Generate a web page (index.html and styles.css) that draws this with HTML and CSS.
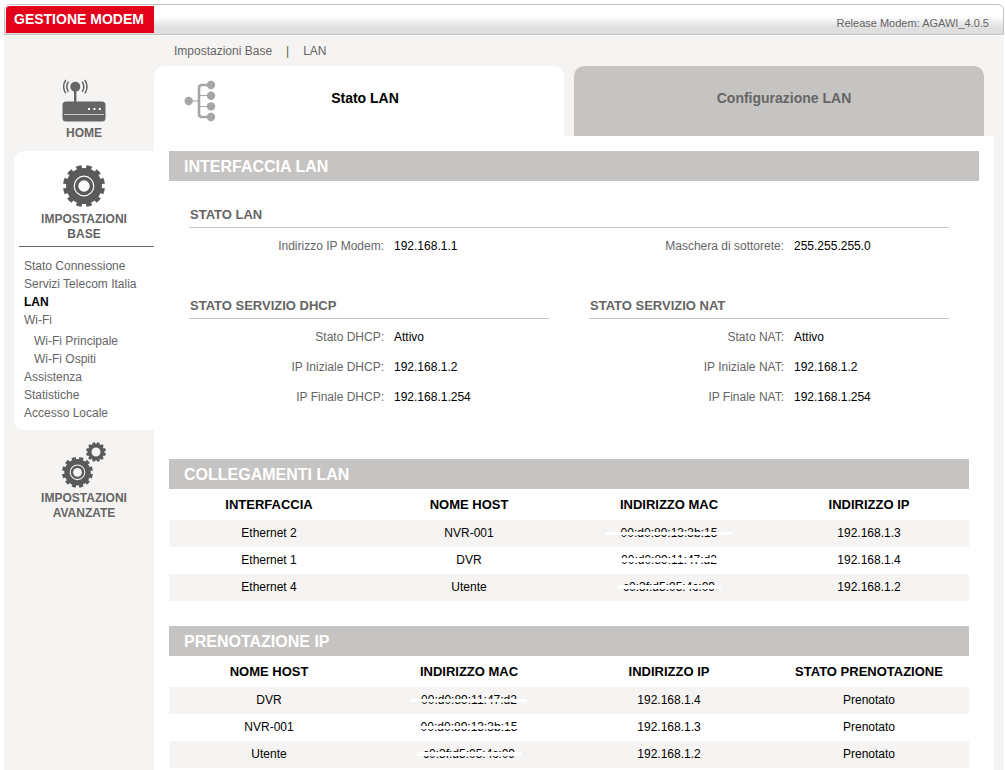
FILE: index.html
```html
<!DOCTYPE html>
<html lang="it">
<head>
<meta charset="utf-8">
<title>Gestione Modem - Stato LAN</title>
<link rel="stylesheet" href="styles.css">
</head>
<body>
<div class="page">
  <header class="topbar">
    <h1 class="brand">GESTIONE MODEM</h1>
    <span class="release">Release Modem: AGAWI_4.0.5</span>
  </header>
  <div class="layout">
    <nav class="sidebar">
      <a class="nav-main nav-home" href="#home">
        <svg class="icon-home" viewBox="0 0 44 43" width="44" height="43" aria-hidden="true">
          <rect x="0.5" y="22.5" width="43" height="20" rx="3.5" fill="#656565"/>
          <rect x="12" y="8" width="2.4" height="16" fill="#656565"/>
          <circle cx="13.3" cy="7.7" r="5" fill="#656565"/>
          <path d="M6.4 2.6Q3.2 7.7 6.4 12.8M3.8 1Q-0.6 7.7 3.8 14.4M20.2 2.6Q23.4 7.7 20.2 12.8M22.8 1Q27.2 7.7 22.8 14.4" fill="none" stroke="#656565" stroke-width="1.5"/>
          <path d="M2 35.5H42" stroke="#c9c9c9"/>
          <path d="M26 30h2M31.4 30h2M36.8 30h2" stroke="#fff" stroke-width="2"/>
        </svg>
        <span>HOME</span>
      </a>
      <div class="panel">
        <a class="nav-main nav-base" href="#base">
          <svg viewBox="0 0 42 42" width="42" height="42" aria-hidden="true">
            <circle cx="21" cy="21" r="19" fill="none" stroke="#5a5a5a" stroke-width="4" pathLength="24" stroke-dasharray="1.1 0.9" stroke-dashoffset="-0.45"/>
            <circle cx="21" cy="21" r="18" fill="#5a5a5a"/>
            <circle cx="21" cy="21" r="9.8" fill="none" stroke="#fff" stroke-width="1.2"/>
            <circle cx="21" cy="21" r="5.7" fill="#fff"/>
          </svg>
          <span>IMPOSTAZIONI<br>BASE</span>
        </a>
        <ul class="submenu">
          <li><a href="#conn">Stato Connessione</a></li>
          <li><a href="#servizi">Servizi Telecom Italia</a></li>
          <li><a class="current" href="#lan">LAN</a></li>
          <li><a href="#wifi">Wi-Fi</a>
            <ul class="nested">
              <li><a href="#principale">Wi-Fi Principale</a></li>
              <li><a href="#ospiti">Wi-Fi Ospiti</a></li>
            </ul>
          </li>
          <li><a href="#assistenza">Assistenza</a></li>
          <li><a href="#statistiche">Statistiche</a></li>
          <li><a href="#accesso">Accesso Locale</a></li>
        </ul>
      </div>
      <a class="nav-main nav-adv" href="#avanzate">
        <svg viewBox="0 0 44 46" width="44" height="46" aria-hidden="true">
          <circle cx="15.5" cy="30.3" r="13.8" fill="none" stroke="#5a5a5a" stroke-width="3.4" pathLength="24" stroke-dasharray="1.1 0.9" stroke-dashoffset="-0.45"/>
          <circle cx="15.5" cy="30.3" r="13.2" fill="#5a5a5a"/>
          <circle cx="15.5" cy="30.3" r="7.3" fill="none" stroke="#f5f4f2" stroke-width="1.1"/>
          <circle cx="15.5" cy="30.3" r="4.4" fill="#f5f4f2"/>
          <circle cx="34" cy="10" r="8.7" fill="none" stroke="#5a5a5a" stroke-width="2.4" pathLength="24" stroke-dasharray="1.1 0.9" stroke-dashoffset="-0.45"/>
          <circle cx="34" cy="10" r="6.5" fill="none" stroke="#5a5a5a" stroke-width="4"/>
        </svg>
        <span>IMPOSTAZIONI<br>AVANZATE</span>
      </a>
    </nav>
    <main class="main">
      <div class="breadcrumb"><a href="#base">Impostazioni Base</a><span class="sep">|</span><a href="#lan">LAN</a></div>
      <div class="tabs">
        <a class="tab active" href="#stato">
          <svg class="tab-icon" viewBox="0 0 32 42" width="32" height="42" aria-hidden="true">
            <g fill="none" stroke="#a6a6a6">
              <path d="M27 5H18Q15 5 15 8V34Q15 37 18 37H27" stroke-width="2.6"/>
              <path d="M5 21H15M15 15.5H27M15 26.5H27" stroke-width="1.2"/>
            </g>
            <g fill="#a6a6a6">
              <circle cx="4.7" cy="21" r="4.2"/><circle cx="27" cy="5" r="4.2"/><circle cx="27" cy="15.7" r="4.2"/><circle cx="27" cy="26.4" r="4.2"/><circle cx="27" cy="37" r="4.2"/>
            </g>
          </svg>
          Stato LAN</a>
        <a class="tab" href="#config">Configurazione LAN</a>
      </div>
      <div class="content">
        <section class="interface">
          <h2 class="bar">INTERFACCIA LAN</h2>
          <div class="groups">
            <div class="group wide">
              <h3>STATO LAN</h3>
              <dl class="pair"><dt>Indirizzo IP Modem:</dt><dd>192.168.1.1</dd></dl>
              <dl class="pair"><dt>Maschera di sottorete:</dt><dd>255.255.255.0</dd></dl>
            </div>
            <div class="group">
              <h3>STATO SERVIZIO DHCP</h3>
              <dl class="pair"><dt>Stato DHCP:</dt><dd>Attivo</dd><dt>IP Iniziale DHCP:</dt><dd>192.168.1.2</dd><dt>IP Finale DHCP:</dt><dd>192.168.1.254</dd></dl>
            </div>
            <div class="group">
              <h3>STATO SERVIZIO NAT</h3>
              <dl class="pair"><dt>Stato NAT:</dt><dd>Attivo</dd><dt>IP Iniziale NAT:</dt><dd>192.168.1.2</dd><dt>IP Finale NAT:</dt><dd>192.168.1.254</dd></dl>
            </div>
          </div>
        </section>
        <section class="listing">
          <h2 class="bar">COLLEGAMENTI LAN</h2>
          <table>
            <thead><tr><th>INTERFACCIA</th><th>NOME HOST</th><th>INDIRIZZO MAC</th><th>INDIRIZZO IP</th></tr></thead>
            <tbody>
              <tr><td>Ethernet 2</td><td>NVR-001</td><td><span class="mac long">00:d0:89:13:3b:15</span></td><td>192.168.1.3</td></tr>
              <tr><td>Ethernet 1</td><td>DVR</td><td><span class="mac thick">00:d0:89:11:47:d2</span></td><td>192.168.1.4</td></tr>
              <tr><td>Ethernet 4</td><td>Utente</td><td><span class="mac thick">c0:3f:d5:05:4c:09</span></td><td>192.168.1.2</td></tr>
            </tbody>
          </table>
        </section>
        <section class="listing">
          <h2 class="bar">PRENOTAZIONE IP</h2>
          <table>
            <thead><tr><th>NOME HOST</th><th>INDIRIZZO MAC</th><th>INDIRIZZO IP</th><th>STATO PRENOTAZIONE</th></tr></thead>
            <tbody>
              <tr><td>DVR</td><td><span class="mac">00:d0:89:11:47:d2</span></td><td>192.168.1.4</td><td>Prenotato</td></tr>
              <tr><td>NVR-001</td><td><span class="mac">00:d0:89:13:3b:15</span></td><td>192.168.1.3</td><td>Prenotato</td></tr>
              <tr><td>Utente</td><td><span class="mac thick">c0:3f:d5:05:4c:09</span></td><td>192.168.1.2</td><td>Prenotato</td></tr>
            </tbody>
          </table>
        </section>
      </div>
    </main>
  </div>
</div>
</body>
</html>
```
FILE: styles.css
```css
* {
  box-sizing: border-box;
}

body {
  margin: 0;
  background: #fff;
  color: #000;
  font: 12px/18px "Liberation Sans", Arial, sans-serif;
}

a {
  color: #656565;
  text-decoration: none;
}

h1, h2, h3, ul, dl, dd {
  margin: 0;
  padding: 0;
}

ul {
  list-style: none;
}

.page {
  display: flex;
  flex-direction: column;
  min-height: 100vh;
  padding: 4px 1px 0 4px;
}

.topbar {
  display: flex;
  justify-content: space-between;
  height: 31px;
  margin-bottom: 1px;
  padding: 1px 14px 1px 1px;
  border: 1px solid #c0c3c2;
  border-radius: 6px 6px 0 0;
  background: linear-gradient(#fff 40%, #e0e0e0 75%, #dedede);
}

.brand {
  padding: 0 10px 0 8px;
  border-radius: 4px 0 0 0;
  background: #e2001a;
  color: #fff;
  font-size: 14px;
  line-height: 27px;
}

.release {
  padding-top: 8px;
  color: #656565;
  font-size: 11px;
}

.layout {
  display: flex;
  flex: 1;
  background: #f5f4f2;
}

.sidebar {
  flex: none;
  width: 150px;
  padding: 43px 0 0 10px;
}

.nav-main {
  display: flex;
  flex-direction: column;
  align-items: center;
  font-weight: bold;
  line-height: 15px;
  text-align: center;
}

.nav-home {
  gap: 4px;
  padding-bottom: 10px;
}

.nav-base {
  gap: 5px;
  margin-left: 5px;
  padding: 14px 5px 4px 0;
  border-bottom: 1px solid #656565;
}

.nav-adv {
  gap: 3px;
  padding-top: 12px;
}

.panel {
  padding-bottom: 8px;
  border-radius: 10px 0 0 10px;
  background: #fff;
}

.submenu {
  padding: 10px 0 0 10px;
}

.nested {
  padding: 3px 0 0 10px;
}

.submenu .current {
  color: #000;
  font-weight: bold;
}

.main {
  display: flex;
  flex: 1;
  flex-direction: column;
  padding-right: 10px;
}

.breadcrumb {
  height: 30px;
  padding: 6px 0 0 20px;
  color: #656565;
}

.sep {
  padding: 0 14px;
  color: #4c6a3c;
}

.tabs {
  display: grid;
  grid-template-columns: 1fr 1fr;
  gap: 10px;
  padding-right: 10px;
}

.tab {
  position: relative;
  height: 70px;
  padding-top: 23px;
  border-radius: 10px 10px 0 0;
  background: #c6c4c2;
  font-size: 14px;
  font-weight: bold;
  text-align: center;
}

.tab.active {
  padding-left: 12px;
  background: #fff;
  color: #000;
}

.tab:not(.active) {
  padding-left: 10px;
}

.tab-icon {
  position: absolute;
  top: 14px;
  left: 30px;
}

.content {
  flex: 1;
  padding: 15px 15px 0;
  background: #fff;
}

.bar {
  padding: 2px 0 0 15px;
  background: #c6c4c2;
  color: #fff;
  font-size: 16px;
  line-height: 28px;
}

.groups {
  display: grid;
  grid-template-columns: 1fr 1fr;
  gap: 36px 40px;
  padding: 25px 30px 47px 20px;
}

.group h3 {
  margin-bottom: 3px;
  padding: 0 0 3px 1px;
  border-bottom: 1px solid #c6c4c2;
  color: #656565;
  font-size: 13px;
}

.wide {
  display: grid;
  grid-column: 1 / -1;
  grid-template-columns: 1fr 1fr;
  column-gap: 40px;
}

.wide h3 {
  grid-column: 1 / -1;
}

.pair {
  display: grid;
  grid-template-columns: 195fr 155fr;
  column-gap: 10px;
  line-height: 30px;
}

.pair dt {
  color: #656565;
  text-align: right;
}

.listing {
  margin: 0 10px 25px 0;
}

.listing:last-child {
  margin-bottom: 0;
}

table {
  width: 100%;
  table-layout: fixed;
  border-collapse: collapse;
  text-align: center;
}

th {
  height: 31px;
  padding: 0;
  font-size: 13px;
}

td {
  height: 27px;
  padding: 0 0 2px;
}

tbody tr:nth-child(odd) {
  background: #f5f4f2;
}

.mac {
  position: relative;
}

.mac::after {
  content: "";
  position: absolute;
  top: 6px;
  right: -10px;
  left: -10px;
  height: 3px;
  background: #fff;
}

.mac.long::after {
  right: -15px;
  left: -15px;
}

.mac.thick::after {
  top: 5px;
  right: -6px;
  left: -6px;
  height: 4px;
}
```
